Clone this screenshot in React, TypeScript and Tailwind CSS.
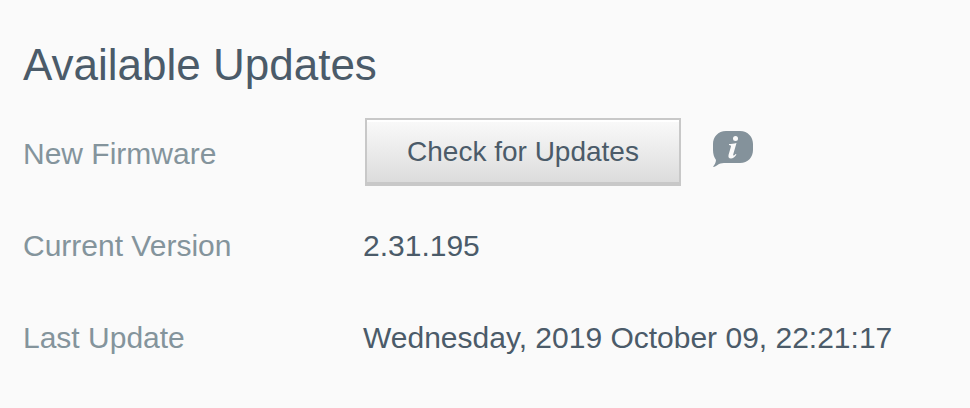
import { Fragment } from 'react'

const details = [
  { label: 'Current Version', value: '2.31.195' },
  { label: 'Last Update', value: 'Wednesday, 2019 October 09, 22:21:17' },
]

function InfoIcon() {
  return (
    <svg viewBox="0 0 40 36" className="w-10 h-9" aria-hidden="true">
      <path
        d="M13 0h14c8 0 13 6 13 13v6c0 7-5 13-13 13H13c-3 0-5 0-7 1-2 1-4 3-6 3 1-2 3-4 3-7C1 26 0 23 0 19v-6C0 6 5 0 13 0z"
        fill="#84929b"
      />
      <circle cx="22.5" cy="7.5" r="2.5" fill="#fafafa" />
      <path
        d="M16 13c2.500 0 4.500-.3 7.500-1l-3.300 11.600c-.3 1.200.5 1.300 2.400-.7l.9.7c-1.800 2.700-3.500 3.900-5.500 3.900-2.300 0-3-1.500-2.400-3.700l2.300-8c.3-1-.2-1.600-1.900-1.700z"
        fill="#fafafa"
      />
    </svg>
  )
}

export default function App() {
  return (
    <main className="min-h-screen bg-[#fafafa] px-[23px] pt-[39px] pb-6 font-['Liberation_Sans',Arial,sans-serif] text-[#4b5b69]">
      <h1 className="text-[44px] leading-[52px]">Available Updates</h1>

      <div className="mt-[27px] grid grid-cols-[340px_1fr] items-start gap-y-5 text-[30px] leading-[72px]">
        <div className="text-[#84949c]">New Firmware</div>
        <div className="ml-0.5 flex items-center gap-8">
          <button
            type="button"
            className="h-[68px] w-[316px] border-2 border-b-4 border-[#c8c8c8] bg-linear-to-b from-[#fafafa] to-[#dcdcdc] pt-0.5 text-[28px] leading-none shadow-[inset_0_2px_0_#fff]"
          >
            Check for Updates
          </button>
          <button type="button" aria-label="Firmware information" className="mb-1.5">
            <InfoIcon />
          </button>
        </div>

        {details.map(({ label, value }) => (
          <Fragment key={label}>
            <div className="text-[#84949c]">{label}</div>
            <div>{value}</div>
          </Fragment>
        ))}
      </div>
    </main>
  )
}
